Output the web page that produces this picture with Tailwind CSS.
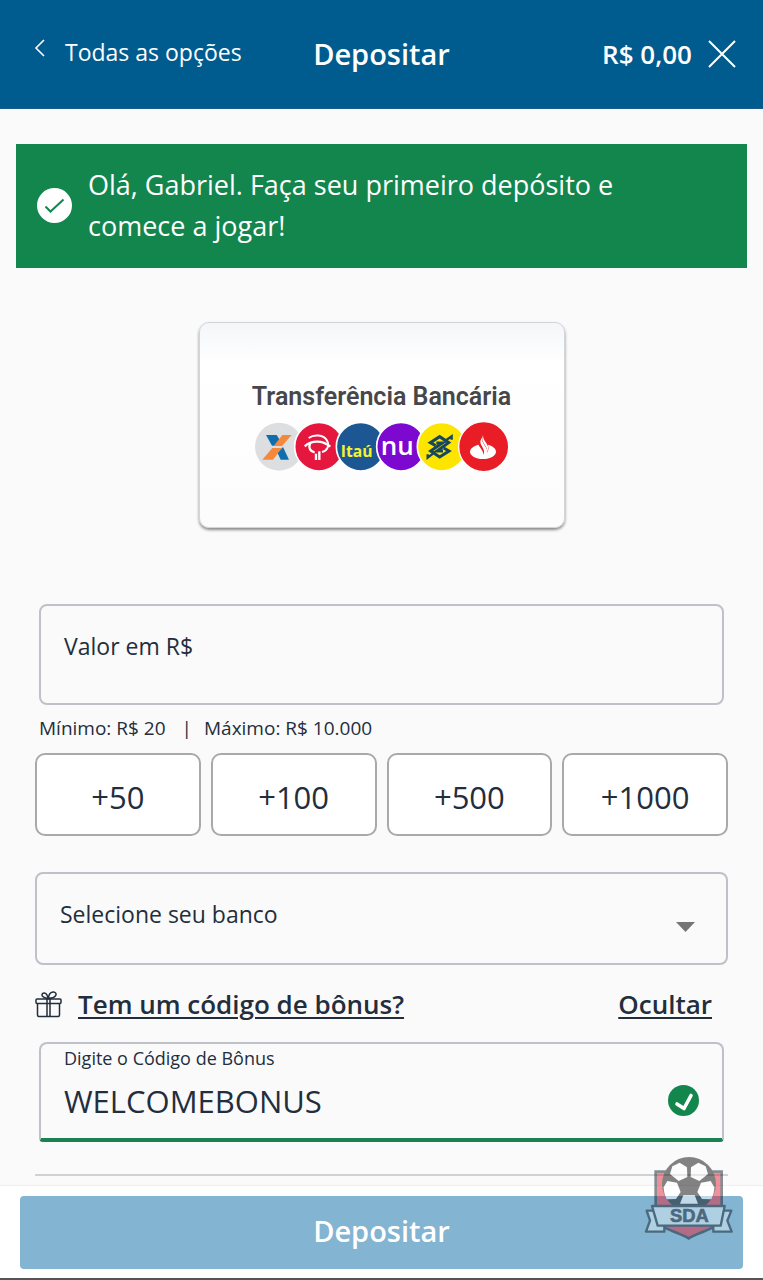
<!DOCTYPE html>
<html lang="pt-BR">
<head>
  <meta charset="UTF-8">
  <meta name="viewport" content="width=device-width, initial-scale=1.0">
  <title>Depositar</title>
  <script src="https://cdn.jsdelivr.net/npm/@tailwindcss/browser@4"></script>
</head>
<body class="relative flex min-h-screen flex-col bg-[#fafafa] font-['Open_Sans',sans-serif] text-[#232e3d]">
  <header class="grid h-[109px] grid-cols-[1fr_auto_1fr] items-center border-b border-[#1c5c88] bg-[#005b8e] px-[27px] text-white">
    <a href="#" class="flex items-center gap-5 pb-1 pl-[7px] text-[23px]">
      <svg class="mb-2 h-[18px] w-[11px]" viewBox="0 0 11 18" fill="none" stroke="currentColor" stroke-width="1.6"><path d="M10 1 2 9l8 8"/></svg>
      Todas as opções
    </a>
    <h1 class="text-[29px] font-semibold">Depositar</h1>
    <div class="flex items-center justify-end gap-4">
      <span class="text-[26px] font-semibold">R$ 0,00</span>
      <button type="button" aria-label="Fechar">
        <svg class="h-7 w-7" viewBox="0 0 28 28" fill="none" stroke="currentColor" stroke-width="2"><path d="m1 1 26 26M27 1 1 27"/></svg>
      </button>
    </div>
  </header>

  <main class="pt-[35px]">
    <div class="mx-4 flex items-center gap-4 bg-[#13864e] px-[21px] pt-[20px] pb-[22px] text-white">
      <svg class="h-[35px] w-[35px] shrink-0" viewBox="0 0 35 35" fill="none"><circle cx="17.5" cy="17.5" r="17.5" fill="#fff"/><path d="m8.5 18.5 5 5L26.500 11.500" stroke="#13864e" stroke-width="2"/></svg>
      <p class="max-w-[560px] text-[27px] leading-[41px]">Olá, Gabriel. Faça seu primeiro depósito e comece a jogar!</p>
    </div>

    <button type="button" class="mx-auto mt-[54px] flex h-[206px] w-[366px] flex-col items-center rounded-[10px] border border-[#d3d5d8] bg-linear-to-b from-[#f4f6f9] via-white via-20% to-[#fdfcfd] pt-[58px] shadow-[0_2px_3px_rgba(0,0,0,0.45)]">
      <span class="font-[Roboto,sans-serif] text-[25px] leading-8 font-semibold text-[#474749]">Transferência Bancária</span>
      <svg class="mt-2 h-[52px] w-[256px]" viewBox="27 138 768 156">
        <!-- Caixa -->
        <circle cx="102" cy="215" r="72" fill="#dcdee0"/>
        <path d="M63 180h32l13 20-9 12H81z" fill="#0f6fae"/>
        <path d="M112 180h28l-29 33H86z" fill="#f5883b"/>
        <path d="M82 219h29l-27 35H52z" fill="#f5883b"/>
        <path d="M98 235l16-19 18 38h-25z" fill="#0f6fae"/>
        <!-- Bradesco -->
        <circle cx="222" cy="215" r="73" fill="#e5173f" stroke="#fff" stroke-width="5"/>
        <g fill="none" stroke="#fff">
          <path d="M191 189c16-12 44-10 54 6 10 17 2 32-14 36" stroke-width="6"/>
          <path d="M179 214c20-18 52-20 77 1" stroke-width="7"/>
          <path d="M195 206c-5 13 1 24 14 26" stroke-width="7"/>
          <path d="M213 255v-19M223 255v-26" stroke-width="7"/>
        </g>
        <!-- Itaú -->
        <circle cx="347" cy="215" r="73" fill="#1c5794" stroke="#fff" stroke-width="5"/>
        <text x="335" y="246" text-anchor="middle" font-family="Open Sans, sans-serif" font-size="47" font-weight="700" fill="#f6f32b">Itaú</text>
        <!-- Nubank -->
        <circle cx="468" cy="215" r="73" fill="#7d08cf" stroke="#fff" stroke-width="5"/>
        <text x="457" y="239" text-anchor="middle" font-family="Open Sans, sans-serif" font-size="78" font-weight="600" fill="#fff">nu</text>
        <!-- Banco do Brasil -->
        <circle cx="590" cy="215" r="73" fill="#fee500" stroke="#fff" stroke-width="5"/>
        <g fill="none" stroke="#17475c" stroke-width="9">
          <path d="M572 212l-16-9 28-18 27 18-35 25h18"/>
          <path d="M596 219l16 9-28 18-27-18 35-24h-18"/>
          <path d="M604 195l16-11v10M564 236l-16 12v-10" stroke-width="7"/>
        </g>
        <!-- Santander -->
        <circle cx="716" cy="215" r="75" fill="#e81d25" stroke="#fff" stroke-width="4"/>
        <path d="M701 209c-16 4-26 12-26 21 0 12 17 22 39 22s39-10 39-22c0-9-9-17-24-21 2 10 2 15-2 24 0-10-3-14-9-23-6-10-8-15-6-23-8 11-7 17-1 27 6 11 8 17 5 26-1-8-4-12-9-20-4-7-5-6-6-11z" fill="#fff"/>
        <path d="M714 180c-4 12-2 18 5 29 6 9 8 14 7 22 6-11 4-18-3-28-6-9-9-13-9-23z" fill="#fff"/>
      </svg>
    </button>

    <form class="mt-[76px] px-[35px]">
      <div class="mx-1">
        <div class="flex h-[101px] flex-col rounded-lg border-2 border-[#bfc1c8] px-[23px] pt-[22px]">
          <label for="valor" class="text-[23px] leading-9">Valor em R$</label>
          <input id="valor" type="text" inputmode="decimal" class="w-full bg-transparent text-[23px] leading-8 outline-none">
        </div>
        <p class="mt-2 flex gap-3 text-[19px] leading-[30px]"><span class="pr-1">Mínimo: R$ 20</span><span>|</span><span>Máximo: R$ 10.000</span></p>
      </div>

      <div class="mt-[10px] grid grid-cols-4 gap-[10px] text-[31px]">
        <button type="button" class="h-[83px] rounded-[10px] border-2 border-[#a9a9a9] bg-white pt-[6px]">+50</button>
        <button type="button" class="h-[83px] rounded-[10px] border-2 border-[#a9a9a9] bg-white pt-[6px]">+100</button>
        <button type="button" class="h-[83px] rounded-[10px] border-2 border-[#a9a9a9] bg-white pt-[6px]">+500</button>
        <button type="button" class="h-[83px] rounded-[10px] border-2 border-[#a9a9a9] bg-white pt-[6px]">+1000</button>
      </div>

      <div class="relative mt-9">
        <select id="banco" aria-label="Selecione seu banco" class="block h-[93px] w-full appearance-none rounded-lg border-2 border-[#bfc1c8] bg-transparent px-[23px] pb-2 text-[23px]">
          <option>Selecione seu banco</option>
        </select>
        <svg class="pointer-events-none absolute top-[50px] right-[33px] h-[10px] w-[19px]" viewBox="0 0 19 10"><path d="M0 0h19l-9.500 10z" fill="#757575"/></svg>
      </div>

      <div class="mt-[21px] flex items-center text-[26px] leading-9 font-semibold">
        <svg class="h-[27px] w-[27px]" viewBox="0 0 27 27" fill="none" stroke="currentColor" stroke-width="1.500">
          <rect x="1" y="8" width="25" height="4.500" rx="1"/>
          <path d="M2.500 12.500V24q0 1.500 1.500 1.500h19q1.500 0 1.500-1.500V12.500M12 8v17.500M15 8v17.500"/>
          <path d="M13 7.500C10 7 6.500 5.500 7 3.500c.6-2.200 4-2 5 .5.500 1.200.9 2.400 1 3.500zM13.500 7.500c0-3 1.500-6 4.500-6.500 2.500-.3 3.800 2 2.500 3.800-1.200 1.700-4 2.500-7 2.700z"/>
        </svg>
        <a href="#" class="ml-4 underline decoration-2 underline-offset-3">Tem um código de bônus?</a>
        <a href="#" class="mr-4 ml-auto underline decoration-2 underline-offset-3">Ocultar</a>
      </div>

      <div class="mx-1 mt-5 flex h-[100px] items-center rounded-t-lg rounded-b border-2 border-b-4 border-[#bfc1c8] border-b-[#1b8152] px-[23px]">
        <div class="flex h-full min-w-0 flex-1 flex-col">
          <label for="codigo" class="text-lg leading-7">Digite o Código de Bônus</label>
          <input id="codigo" type="text" value="WELCOMEBONUS" class="mt-1 w-full bg-transparent text-[31px] leading-[50px] outline-none">
        </div>
        <svg class="mt-[18px] h-[31px] w-[31px]" viewBox="0 0 31 31" fill="none"><circle cx="15.500" cy="15.500" r="15.500" fill="#13864e"/><path d="m9 19 7 4.500 7-13" stroke="#fff" stroke-width="3.600" stroke-linecap="round" stroke-linejoin="round"/></svg>
      </div>

      <hr class="mt-8 border-t-2 border-[#d0d1d2]">
    </form>
  </main>

  <footer class="mt-auto border-b-2 border-[#555] bg-white px-5 pt-[10px] pb-[9px] shadow-[0_-1px_1px_#f0f0f0]">
    <button type="submit" class="block h-[73px] w-full rounded bg-[#83b4d2] pb-1 text-[29px] font-semibold text-white">Depositar</button>
  </footer>

  <svg class="pointer-events-none absolute right-[29px] bottom-[40px] h-[85px] w-[90px] opacity-50" viewBox="42 30 270 255" role="img" aria-label="SDA">
    <path d="M77 80h198v135c0 22-20 30-50 43-20 8-36 13-49 22-13-9-29-14-49-22-30-13-50-21-50-43z" fill="#e3273d" stroke="#13202c" stroke-width="8"/>
    <path d="M74 197H50l10 30-12 33h55v-20zM278 197h26l-12 30 13 33h-55v-20z" fill="#dcecf5" stroke="#13202c" stroke-width="7" stroke-linejoin="round"/>
    <circle cx="177" cy="117" r="81" fill="#0c0c0c"/>
    <g fill="#fff">
      <path d="M149 53l22 14 1 29-26 12-26-21 7-23z"/>
      <path d="M205 53l-22 14-1 29 26 12 26-21-7-23z"/>
      <path d="M112 108l29 5 11 28-14 21-28 1c-5-10-9-23-9-36z"/>
      <path d="M242 108l-29 5-11 28 14 21 28 1c5-10 9-23 9-36z"/>
      <path d="M160 151h34l10 25h-54z"/>
    </g>
    <path d="M66 183h218l-12 59H83z" fill="#dcecf5" stroke="#13202c" stroke-width="7" stroke-linejoin="round"/>
    <text x="178" y="232" text-anchor="middle" font-family="Liberation Sans, sans-serif" font-size="55" font-weight="700" fill="#13202c" stroke="#13202c" stroke-width="2">SDA</text>
  </svg>
</body>
</html>
